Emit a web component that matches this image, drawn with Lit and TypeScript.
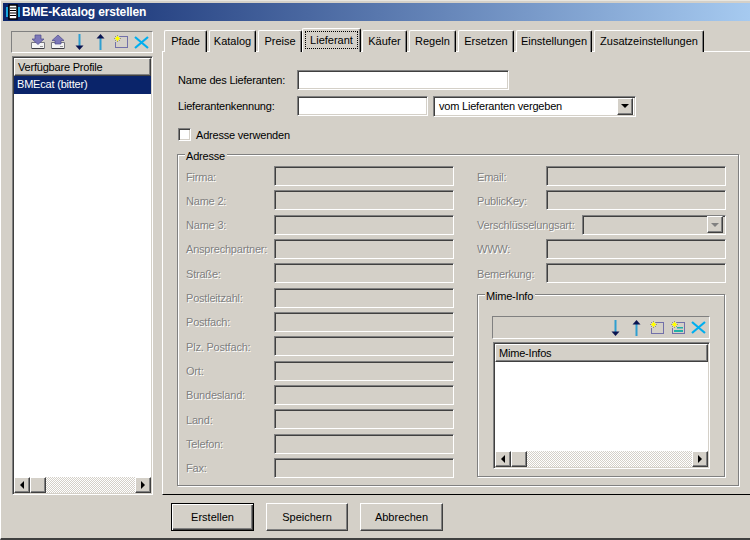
import { LitElement, html, css, svg } from "lit";
import { customElement } from "lit/decorators.js";

const tabs: [string, number][] = [
  ["Pfade", 43], ["Katalog", 47], ["Preise", 44], ["Lieferant", 56], ["Käufer", 45],
  ["Regeln", 47], ["Ersetzen", 56], ["Einstellungen", 76], ["Zusatzeinstellungen", 110],
];
const leftLabels = ["Firma:", "Name 2:", "Name 3:", "Ansprechpartner:", "Straße:", "Postleitzahl:", "Postfach:", "Plz. Postfach:", "Ort:", "Bundesland:", "Land:", "Telefon:", "Fax:"];

const tray = (up: boolean) => svg`<svg class="ic" width="14" height="16" viewBox="0 0 14 16">
  <path d="M0.5 8.500h13v6h-13z" fill="#f4f4f4" stroke="#77777f"/>
  <path d="M1 14.500h12" stroke="#3c3c44"/>
  <path d="M9 12.500h3" stroke="#999"/>
  <path d="${up ? "M7 1L13 6.500H10V10H4V6.500H1z" : "M4 1H10V5H13L7 10.500L1 5H4z"}" fill="#7d78b8" stroke="#4e4a8a" stroke-width=".7"/>
</svg>`;
const down = svg`<svg class="ic" width="9" height="16" viewBox="0 0 9 16"><path d="M4.500 0v12" stroke="#2f9fd0" stroke-width="2"/><path d="M0.500 11.500h8l-4 4.500z" fill="#0a1450"/></svg>`;
const up = svg`<svg class="ic" width="9" height="16" viewBox="0 0 9 16"><path d="M4.500 4v12" stroke="#2f9fd0" stroke-width="2"/><path d="M0.500 4.500h8L4.500 0z" fill="#0a1450"/></svg>`;
const star = svg`<path d="M3.500 0v7M0 3.500h7M1 1l5 5M6 1l-5 5" stroke="#8a8a60" stroke-width=".8"/><path d="M2 2h3v3H2z" fill="#ffff00"/><path d="M3.500 1v5M1 3.500h5" stroke="#ffff00"/>`;
const box = svg`<path d="M6.500 1.500h7v11h-12v-6" fill="none" stroke="#10108a" stroke-dasharray="1 1"/>`;
const neu = svg`<svg class="ic" width="14" height="14" viewBox="0 0 14 14">${box}${star}</svg>`;
const neu2 = svg`<svg class="ic" width="14" height="14" viewBox="0 0 14 14">${box}<path d="M6 6h6v1.500H6z" fill="#20b0a8"/><path d="M3 9h9v2H3z" fill="#20b0a8"/>${star}</svg>`;
const del = svg`<svg class="ic" width="15" height="13" viewBox="0 0 15 13"><path d="M1 1l13 11M14 1L1 12" stroke="#00aeef" stroke-width="2.200" fill="none"/></svg>`;
const doc = svg`<svg width="14" height="16" viewBox="0 0 14 16"><path d="M1 3v10M13 3v10" stroke="#18a8e0" stroke-width="2"/><path d="M3 1h8v14H3z" fill="#fff" stroke="#000" stroke-width="1.500"/><path d="M4 4h6M4 6.500h6M4 9h6M4 11.500h6" stroke="#000"/></svg>`;

@customElement("app-root")
export class AppRoot extends LitElement {
  static styles = css`
    :host { display: block; width: 750px; height: 540px; overflow: hidden; background: #d4d0c8;
      font: 11px "Liberation Sans", Arial, sans-serif; color: #000; box-sizing: border-box; letter-spacing: -0.2px; }
    * { box-sizing: border-box; }
    .win { width: 750px; height: 540px; padding: 2px 0 0 2px; border-left: 1px solid #fff; border-top: 1px solid #e8e6e0; display: flex; flex-direction: column;
      border-bottom: 2px solid #404040; }
    .title { height: 18px; flex: none; display: flex; align-items: center; gap: 2px; padding-left: 3px; color: #fff; font-weight: bold; font-size: 12px; letter-spacing: -0.15px;
      background: linear-gradient(90deg, #0a246a, #a6caf0); }
    .title svg { flex: none; }
    .body { flex: none; display: flex; padding: 10px 0 0 8px; height: 474px; }
    aside { width: 142px; flex: none; display: flex; flex-direction: column; gap: 3px; }
    .tb { height: 22px; flex: none; display: flex; align-items: center; justify-content: flex-end;
      border: 1px solid; border-color: #808080 #fff #fff #808080; }
    .cell { width: 20.8px; flex: none; display: flex; justify-content: center; }
    .tb .ic { display: block; }
    .list { flex: 1; min-height: 0; display: flex; flex-direction: column; background: #fff; padding: 1px;
      border: 1px solid; border-color: #808080 #fff #fff #808080; box-shadow: inset 1px 1px #404040, inset -1px -1px #d4d0c8; }
    aside .list { margin-left: 1px; }
    .lhead { height: 18px; flex: none; line-height: 16px; padding-left: 3px; background: #d4d0c8;
      border: 1px solid; border-color: #fff #404040 #404040 #fff; box-shadow: inset -1px -1px #808080; }
    .lrow { height: 18px; flex: none; line-height: 17px; padding-left: 3px; background: #0a246a; color: #fff; }
    .lbody { flex: 1; }
    .sb { height: 16px; flex: none; display: flex; background: repeating-conic-gradient(#fff 0 25%, #d4d0c8 0 50%) 0 0 / 2px 2px; }
    .sbb { width: 16px; height: 16px; flex: none; background: #d4d0c8; display: flex; align-items: center; justify-content: center;
      border: 1px solid; border-color: #fff #404040 #404040 #fff; box-shadow: inset -1px -1px #808080; }
    .sp { flex: 1; }
    .tri-l { width: 0; height: 0; border: 4px solid transparent; border-left: 0; border-right-color: #000; }
    .tri-r { width: 0; height: 0; border: 4px solid transparent; border-right: 0; border-left-color: #000; }
    main { margin-left: 9px; flex: 1; min-width: 0; display: flex; flex-direction: column; margin-top: -10px; }
    .tabs { height: 31px; flex: none; display: flex; align-items: flex-end; padding-left: 2px; gap: 2px; position: relative; z-index: 1; margin-bottom: -1px; letter-spacing: 0; }
    .tab { height: 22px; flex: none; text-align: center; line-height: 20px; background: #d4d0c8; border-radius: 2px 2px 0 0;
      border: 1px solid; border-color: #fff #000 transparent #fff; border-bottom: 0; box-shadow: inset -1px 0 #808080; }
    .tab.on { height: 24px; margin: 0 -1px 0 -2px; padding: 2px 2px 0; position: relative; z-index: 1; }
    .tab.on span { display: block; height: 18px; border: 1px dotted #000; line-height: 16px; }
    .panel { height: 444px; flex: none; border-top: 1px solid #fff; border-left: 1px solid #fff; border-bottom: 1px solid #000; padding: 18px 0 0 14px; }
    .top { display: grid; grid-template-columns: 115px 131px 203px; column-gap: 5px; row-gap: 6px; grid-auto-rows: 20px; align-items: center; }
    .top label { padding-left: 1px; white-space: nowrap; }
    .field { height: 20px; border: 1px solid; border-color: #808080 #fff #fff #808080; box-shadow: inset 1px 1px #404040, inset -1px -1px #d4d0c8; }
    .white { background: #fff; }
    .wide { grid-column: 2 / 4; width: 212px; }
    .sel { display: flex; align-items: center; padding: 2px; height: 21px; }
    .sel .v { flex: 1; padding-left: 3px; }
    .sbtn { width: 16px; height: 17px; flex: none; background: #d4d0c8; display: flex; align-items: center; justify-content: center;
      border: 1px solid; border-color: #fff #404040 #404040 #fff; box-shadow: inset -1px -1px #808080; }
    .tri-d { width: 0; height: 0; border: 4px solid transparent; border-bottom: 0; border-top-color: #000; }
    .dis .tri-d { border-top-color: #808080; }
    .check { display: flex; align-items: center; gap: 5px; margin: 12px 0 0 1px; height: 13px; }
    .box { width: 13px; height: 13px; background: #fff; border: 1px solid; border-color: #808080 #fff #fff #808080; box-shadow: inset 1px 1px #404040, inset -1px -1px #d4d0c8; }
    .group { position: relative; border: 1px solid #808080; box-shadow: 1px 1px #fff, inset 1px 1px #fff; }
    .group > b { position: absolute; top: -5px; left: 7px; font-weight: normal; background: #d4d0c8; padding: 0 2px 0 1px; line-height: 13px; }
    .addr { margin-top: 13px; width: 562px; height: 332px; padding: 11px 12px 0 8px; display: grid; grid-template-columns: 268px 249px; column-gap: 23px; }
    .rows { display: grid; grid-template-columns: 88px 180px; grid-template-rows: repeat(13, 20px); row-gap: 4.33px; align-items: center; }
    .rows.r { grid-template-columns: 69px 180px; grid-template-rows: repeat(5, 20px); }
    .d { color: #808080; text-shadow: 1px 1px 0 #fff; white-space: nowrap; padding-top: 1px; }
    .dsel { grid-column: 2; justify-self: end; width: 144px; display: flex; justify-content: flex-end; align-items: center; padding: 2px; }
    .rcol { display: flex; flex-direction: column; }
    .mimegroup { margin-top: 11px; width: 248px; height: 183px; padding: 21px 14px 0; }
    .mimegroup .tb { width: 218px; height: 23px; }
    .mimegroup .list { margin-top: 3px; height: 127px; flex: none; margin-left: 1px; width: 217px; }
    .foot { display: flex; gap: 12px; padding: 8px 0 0 168px; letter-spacing: 0; }
    .btn { width: 83px; height: 28px; display: flex; align-items: center; justify-content: center; background: #d4d0c8;
      border: 1px solid; border-color: #fff #404040 #404040 #fff; box-shadow: inset -1px -1px #808080; }
    .btn.def { border: 1px solid #000; box-shadow: inset 1px 1px #fff, inset -1px -1px #404040, inset -2px -2px #808080; }
    .btn.mid { width: 82px; }
  `;

  scrollbar() {
    return html`<div class="sb"><div class="sbb"><i class="tri-l"></i></div><div class="sbb"></div><div class="sp"></div><div class="sbb"><i class="tri-r"></i></div></div>`;
  }

  icons(list: unknown[]) {
    return list.map((i) => html`<span class="cell">${i}</span>`);
  }

  render() {
    return html`<div class="win">
      <div class="title">${doc}<span>BME-Katalog erstellen</span></div>
      <div class="body">
        <aside>
          <div class="tb">${this.icons([tray(false), tray(true), down, up, neu, del])}</div>
          <div class="list">
            <div class="lhead">Verfügbare Profile</div>
            <div class="lrow">BMEcat (bitter)</div>
            <div class="lbody"></div>
            ${this.scrollbar()}
          </div>
        </aside>
        <main>
          <div class="tabs">
            ${tabs.map(([t, w]) => t === "Lieferant"
              ? html`<div class="tab on" style="width:${w + 3}px"><span>${t}</span></div>`
              : html`<div class="tab" style="width:${w}px">${t}</div>`)}
          </div>
          <div class="panel">
            <div class="top">
              <label>Name des Lieferanten:</label><div class="field white wide"></div>
              <label>Lieferantenkennung:</label><div class="field white"></div>
              <div class="field white sel"><span class="v">vom Lieferanten vergeben</span><div class="sbtn"><i class="tri-d"></i></div></div>
            </div>
            <div class="check"><div class="box"></div><span>Adresse verwenden</span></div>
            <div class="group addr">
              <b>Adresse</b>
              <div class="rows">
                ${leftLabels.map((l) => html`<span class="d">${l}</span><div class="field"></div>`)}
              </div>
              <div class="rcol">
                <div class="rows r">
                  <span class="d">Email:</span><div class="field"></div>
                  <span class="d">PublicKey:</span><div class="field"></div>
                  <span class="d">Verschlüsselungsart:</span><div class="field dsel dis"><div class="sbtn"><i class="tri-d"></i></div></div>
                  <span class="d">WWW:</span><div class="field"></div>
                  <span class="d">Bemerkung:</span><div class="field"></div>
                </div>
                <div class="group mimegroup">
                  <b>Mime-Info</b>
                  <div class="tb">${this.icons([down, up, neu, neu2, del])}</div>
                  <div class="list">
                    <div class="lhead">Mime-Infos</div>
                    <div class="lbody"></div>
                    ${this.scrollbar()}
                  </div>
                </div>
              </div>
            </div>
          </div>
        </main>
      </div>
      <div class="foot">
        <div class="btn def">Erstellen</div>
        <div class="btn mid">Speichern</div>
        <div class="btn">Abbrechen</div>
      </div>
    </div>`;
  }
}
